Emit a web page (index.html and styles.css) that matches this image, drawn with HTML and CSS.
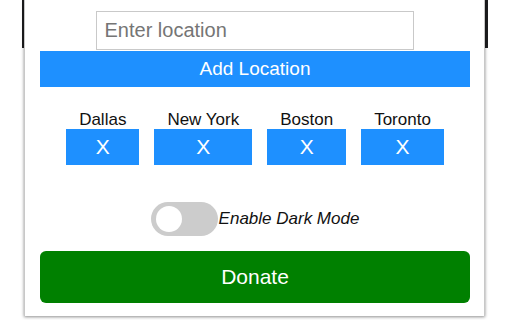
FILE: index.html
```html
<!DOCTYPE html>
<html>
<head>
<meta charset="utf-8">
<link rel="stylesheet" href="styles.css">
</head>
<body>
<div class="stage">
  <div class="edge edge-left"></div>
  <div class="edge edge-right"></div>
  <div class="popup">
    <input class="loc-input" type="text" placeholder="Enter location">
    <button class="add-btn">Add Location</button>
    <div class="cities">
      <div class="city"><span class="city-name">Dallas</span><button class="remove-btn">X</button></div>
      <div class="city"><span class="city-name">New York</span><button class="remove-btn">X</button></div>
      <div class="city"><span class="city-name">Boston</span><button class="remove-btn">X</button></div>
      <div class="city"><span class="city-name">Toronto</span><button class="remove-btn">X</button></div>
    </div>
    <div class="dark-row">
      <span class="switch"><span class="knob"></span></span>
      <span class="dark-label">Enable Dark Mode</span>
    </div>
    <button class="donate-btn">Donate</button>
  </div>
</div>
</body>
</html>
```
FILE: styles.css
```css
html, body {
  margin: 0;
  padding: 0;
  background: #fff;
}
body {
  font-family: "Liberation Sans", Arial, sans-serif;
}
.stage {
  position: relative;
  width: 512px;
  height: 320px;
  overflow: hidden;
}
.edge {
  position: absolute;
  top: 0;
  width: 3px;
  height: 48px;
  background: #1d1d1f;
}
.edge-left { left: 22px; }
.edge-right { left: 485px; }
.popup {
  position: relative;
  margin-left: 24px;
  width: 461px;
  box-sizing: border-box;
  padding: 11px 14px 13px 15px;
  background: #fff;
  border-left: 1px solid #c8c8c8;
  border-right: 1px solid #c8c8c8;
  box-shadow: 0 1px 3px rgba(0, 0, 0, 0.45);
  display: flex;
  flex-direction: column;
}
.loc-input {
  display: block;
  align-self: center;
  width: 318px;
  height: 39px;
  box-sizing: border-box;
  margin: 0 0 0 -1px;
  padding: 0 8px;
  border: 1px solid #c9c9c9;
  font-family: inherit;
  font-size: 20px;
  color: #333;
  outline: none;
}
.loc-input::placeholder {
  color: #757575;
}
.add-btn {
  margin-top: 1px;
  height: 36px;
  width: 100%;
  border: none;
  padding: 0;
  background: #1e90ff;
  color: #fff;
  font-family: inherit;
  font-size: 19px;
}
.cities {
  display: flex;
  justify-content: center;
  gap: 15px;
  margin-top: 23px;
}
.city {
  display: flex;
  flex-direction: column;
  align-items: stretch;
}
.city-name {
  padding: 0 13px;
  text-align: center;
  font-size: 17px;
  line-height: 19px;
  color: #111;
}
.remove-btn {
  height: 36px;
  border: none;
  padding: 0;
  background: #1e90ff;
  color: #fff;
  font-family: inherit;
  font-size: 21px;
}
.dark-row {
  display: flex;
  justify-content: center;
  align-items: center;
  margin-top: 37px;
  height: 34px;
}
.switch {
  position: relative;
  width: 67px;
  height: 34px;
  border-radius: 17px;
  background: #cccccc;
}
.knob {
  position: absolute;
  left: 5px;
  top: 4px;
  width: 26px;
  height: 26px;
  border-radius: 50%;
  background: #fff;
}
.dark-label {
  margin-left: 1px;
  font-style: italic;
  font-size: 17px;
  color: #111;
}
.donate-btn {
  margin-top: 15px;
  height: 52px;
  width: 100%;
  border: none;
  border-radius: 6px;
  padding: 0;
  background: #008000;
  color: #fff;
  font-family: inherit;
  font-size: 21px;
}
```
